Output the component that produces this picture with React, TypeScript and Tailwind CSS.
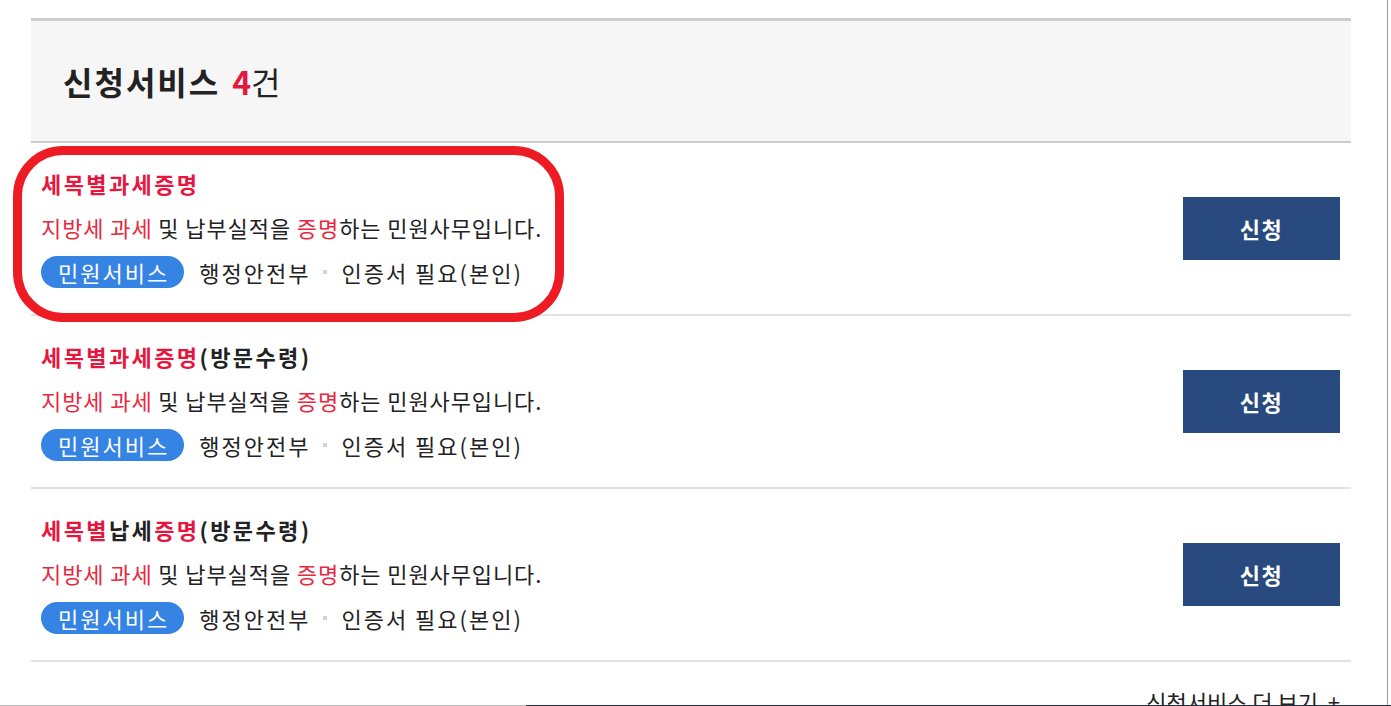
const services = [
  { parts: [{ t: "세목별과세증명", red: true }] },
  {
    parts: [
      { t: "세목별과세증명", red: true },
      { t: "(방문수령)", red: false },
    ],
  },
  {
    parts: [
      { t: "세목별", red: true },
      { t: "납세", red: false },
      { t: "증명", red: true },
      { t: "(방문수령)", red: false },
    ],
  },
];

function ServiceRow({ parts }: { parts: { t: string; red: boolean }[] }) {
  return (
    <li className="flex h-[173px] items-center justify-between border-b-2 border-[#e2e2e2] pl-[10px] pr-[11px]">
      <div className="mt-[-1px] flex flex-col">
        <p className="h-[30px] text-[22px] font-bold leading-[30px] tracking-[2.4px]">
          {parts.map((p, i) => (
            <span key={i} className={p.red ? "text-[#e5173f]" : "text-[#222]"}>
              {p.t}
            </span>
          ))}
        </p>
        <p className="mt-[14px] h-[30px] text-[22px] leading-[30px] tracking-[0.9px] text-[#222]">
          <span className="text-[#e8283f]">지방세 과세</span> 및 납부실적을{" "}
          <span className="text-[#e8283f]">증명</span>하는 민원사무입니다.
        </p>
        <div className="mt-[14px] flex h-[32px] items-center text-[22px] tracking-[2px] text-[#222]">
          <span className="flex h-[32px] items-center rounded-full bg-[#3584e4] pl-[17px] pr-[15px] text-white">
            민원서비스
          </span>
          <span className="ml-[15px]">행정안전부</span>
          <span className="ml-[13px] mr-[14px] h-[4px] w-[4px] bg-[#d4d4d4]" />
          <span>인증서 필요(본인)</span>
        </div>
      </div>
      <button className="h-[63px] w-[157px] bg-[#294a7e] text-[22px] font-bold tracking-[1.5px] text-white">
        신청
      </button>
    </li>
  );
}

export default function App() {
  return (
    <div
      className="relative h-[706px] overflow-hidden bg-white"
      style={{ fontFamily: '"Noto Sans CJK KR", "Noto Sans", sans-serif' }}
    >
      <div className="ml-[31px] w-[1320px] pt-[18px]">
        {/* Header */}
        <div className="flex h-[125px] items-center border-t-[3px] border-b-2 border-[#cccccc] bg-[#f6f6f6] pl-[32px]">
          <h2 className="text-[32px] leading-none text-[#222]">
            <span className="font-bold tracking-[2px]">신청서비스</span>
            <span className="ml-[12px] font-bold text-[#e5173f]">4</span>
            <span>건</span>
          </h2>
        </div>

        <ul>
          {services.map((s, i) => (
            <ServiceRow key={i} parts={s.parts} />
          ))}
        </ul>

        <div className="mt-[24px] flex justify-end pr-[11px]">
          <a className="text-[22px] leading-[30px] text-[#222]">신청서비스 더 보기 &nbsp;+</a>
        </div>
      </div>

      {/* highlight annotation */}
      <div className="pointer-events-none absolute left-[13px] top-[146px] h-[176px] w-[551px] rounded-[50px] border-[9px] border-[#ed1c24]" />

      {/* window edges */}
      <div className="absolute right-[3px] top-0 h-full w-px bg-[#9a9a9a]" />
      <div className="absolute bottom-0 left-0 flex h-px w-full">
        <div className="w-[526px] bg-[#bcbcbc]" />
        <div className="flex-1 bg-[#25303a]" />
      </div>
    </div>
  );
}
